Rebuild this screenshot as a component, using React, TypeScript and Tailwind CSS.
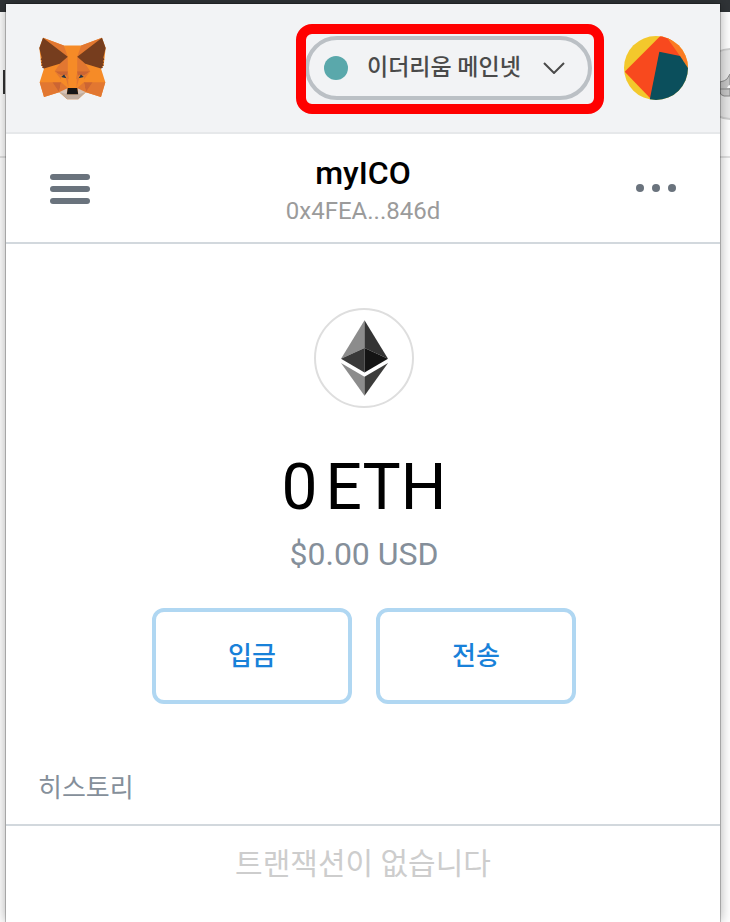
import type { ReactNode } from "react";

// Fox logo
const FoxLogo = () => {
  return (
    <svg viewBox="118 110 200 188" className="h-[63px] w-[67px]" role="img" aria-label="MetaMask">
      <path fill="#F6851B" fillOpacity="0.95" d="M130 112L192 135H245L306 112L317 143L311 195L303 204L316 245L303 289L258 275L235 296H202L178 275L133 289L120 245L133 204L125 195L119 143Z" />
      <FoxHalf />
      <g transform="matrix(-1 0 0 1 436 0)">
        <FoxHalf />
      </g>
      <path fill="#C0AD9E" d="M180 275L202 281H234L257 275L235 296H202Z" />
      <path fill="#161616" d="M204 262H232L235 281H201Z" />
    </svg>
  );
};

const FoxHalf = () => {
  return (
    <>
      <path fill="#E27731" d="M130 112L192 135L204 169Z" />
      <path fill="#E27731" d="M204 169V212H165L180 190Z" />
      <path fill="#763D1E" d="M130 112L204 169L180 190L133 204L127 202L130 197L124 195L128 190L124 186L127 181L123 177L126 172L119 143Z" />
      <path fill="#CC6533" d="M165 212H204L206 236L199 224L183 225Z" />
      <path fill="#E27731" d="M165 212L183 225L184 237Z" />
      <path fill="#E27731" d="M204 212L206 262L199 236Z" />
      <path fill="#E27731" d="M120 245H158L178 275L133 289Z" />
      <path fill="#CC6533" d="M158 245H184L178 275Z" />
      <path fill="#E27731" d="M184 245L204 262L201 268L178 275Z" />
      <path fill="#D7C1B3" d="M178 275L203 263L201 281L202 288Z" />
      <path fill="#233447" d="M184 229L193 222L200 233Z" />
    </>
  );
};

// Account avatar
const Identicon = () => {
  return (
    <svg viewBox="0 0 192 192" className="size-16" aria-hidden="true">
      <clipPath id="avatar">
        <circle cx="96" cy="96" r="96" />
      </clipPath>
      <g clipPath="url(#avatar)">
        <path fill="#F3C82C" d="M0 0H192V192H0Z" />
        <path fill="#F8491E" d="M2 107L112 -3H130L180 60L160 140L78 186Z" />
        <path fill="#FB7B23" d="M124 -2H192V96L168 60Z" />
        <path fill="#0B4F5C" d="M106 47L168 60L192 96V192H77Z" />
      </g>
    </svg>
  );
};

const EthLogo = () => {
  return (
    <div className="flex size-[100px] items-center justify-center rounded-full border-2 border-[#dedede] bg-white">
      <svg viewBox="0 0 142 228" className="h-[76px] w-[47px]" role="img" aria-label="Ethereum">
        <path fill="#8C8C8C" d="M71 0V84L0 116Z" />
        <path fill="#343434" d="M71 0L142 116L71 84Z" />
        <path fill="#393939" d="M71 84V158L0 116Z" />
        <path fill="#141414" d="M71 84L142 116L71 158Z" />
        <path fill="#8C8C8C" d="M0 129L71 171V228Z" />
        <path fill="#3C3C3B" d="M142 129L71 171V228Z" />
      </svg>
    </div>
  );
};

// Network picker with the red marker around it
const NetworkSelect = () => {
  return (
    <div className="relative flex h-16 w-[287px] items-center rounded-full border-4 border-[#bbc0c5] pl-[15px]">
      <span className="size-6 shrink-0 rounded-full bg-[#5aa8ab]" />
      <select
        aria-label="네트워크"
        className="h-14 w-full appearance-none bg-transparent pl-[19px] text-[23px] font-medium text-[#4a4a4a]"
      >
        <option>이더리움 메인넷</option>
      </select>
      <svg viewBox="0 0 22 12" className="pointer-events-none absolute right-[23px] h-3 w-[22px]" aria-hidden="true">
        <path d="M1 1L11 11L21 1" fill="none" stroke="#4a4a4a" strokeWidth="2" />
      </svg>
      <div className="pointer-events-none absolute -top-4 -right-4 -bottom-[18px] -left-[13px] rounded-2xl border-10 border-[#ff0000]" />
    </div>
  );
};

const Header = () => {
  return (
    <header className="flex h-[130px] items-center border-b-2 border-[#e6e8ea] bg-[#f2f3f5] pr-8 pl-[33px]">
      <FoxLogo />
      <div className="ml-auto flex items-center gap-8">
        <NetworkSelect />
        <button aria-label="계정" className="rounded-full">
          <Identicon />
        </button>
      </div>
    </header>
  );
};

const AccountBar = () => {
  return (
    <div className="flex h-[110px] items-center justify-between border-b-2 border-[#d2d8dd] px-11">
      <button aria-label="메뉴" className="flex w-10 flex-col gap-1.5 pt-0.5">
        <span className="h-1.5 rounded-full bg-[#6a737d]" />
        <span className="h-1.5 rounded-full bg-[#6a737d]" />
        <span className="h-1.5 rounded-full bg-[#6a737d]" />
      </button>
      <div className="pt-1.5 text-center">
        <h1 className="text-[32px] leading-10 font-medium text-black">myICO</h1>
        <p className="text-2xl leading-9 text-[#9b9b9b]">0x4FEA...846d</p>
      </div>
      <button aria-label="계정 옵션" className="flex gap-2">
        <span className="size-2 rounded-full bg-[#6a737d]" />
        <span className="size-2 rounded-full bg-[#6a737d]" />
        <span className="size-2 rounded-full bg-[#6a737d]" />
      </button>
    </div>
  );
};

const ActionButton = ({ children }: { children: ReactNode }) => {
  return (
    <button className="h-24 w-[200px] rounded-xl border-4 border-[#b0d7f2] bg-white text-[26px] font-medium text-[#1881d9]">
      {children}
    </button>
  );
};

const Balance = () => {
  return (
    <section className="flex flex-col items-center pt-16 pl-0.5">
      <EthLogo />
      <p className="mt-10 flex gap-2 text-[64px] leading-20 text-black">
        <span>0</span>
        <span>ETH</span>
      </p>
      <p className="mt-1.5 text-[32px] leading-10 text-[#858f9a]">$0.00 USD</p>
      <div className="mt-[34px] flex gap-6">
        <ActionButton>입금</ActionButton>
        <ActionButton>전송</ActionButton>
      </div>
    </section>
  );
};

const History = () => {
  return (
    <section className="mt-16">
      <h2 className="border-b-2 border-[#d2d8dd] px-8 pb-4 text-[26px] leading-10 text-[#858f9a]">히스토리</h2>
      <p className="pt-4 text-center text-[30px] leading-11 text-[#cdcdcd]">트랜잭션이 없습니다</p>
    </section>
  );
};

// Page visible behind the popup
const Backdrop = () => {
  return (
    <div aria-hidden="true" className="absolute inset-0 -z-10 overflow-hidden bg-white">
      <div className="h-3 bg-[#303437]" />
      <div className="h-[146px] border-b-2 border-[#e2e2e2]" />
      <div className="absolute top-[70px] left-[3px] h-6 w-[2px] bg-[#333333]" />
      <div className="absolute top-12 -right-[38px] size-[72px] rounded-full border-2 border-[#d0d0d0] bg-[#e8e8e8]" />
      <svg viewBox="0 0 10 24" className="absolute top-[74px] right-0 h-6 w-2.5">
        <path d="M0 8Q5 7 7 5L10 0V22H4Q0 21 0 18Z" fill="#c8c8c8" stroke="#8a8a8a" />
        <path d="M0 15H10" stroke="#8a8a8a" />
        <path d="M7 14Q8 11 10 11V14Z" fill="#ffffff" />
      </svg>
    </div>
  );
};

export default function App() {
  return (
    <div className="relative isolate flex min-h-screen flex-col overflow-hidden pt-1 pr-2.5 pl-1.5 font-[Roboto,'Noto_Sans_CJK_KR',sans-serif]">
      <Backdrop />
      <main className="grow bg-white shadow-[0_0_0_1px_rgba(0,0,0,0.22),0_0_12px_rgba(0,0,0,0.35)]">
        <Header />
        <AccountBar />
        <Balance />
        <History />
      </main>
    </div>
  );
}
